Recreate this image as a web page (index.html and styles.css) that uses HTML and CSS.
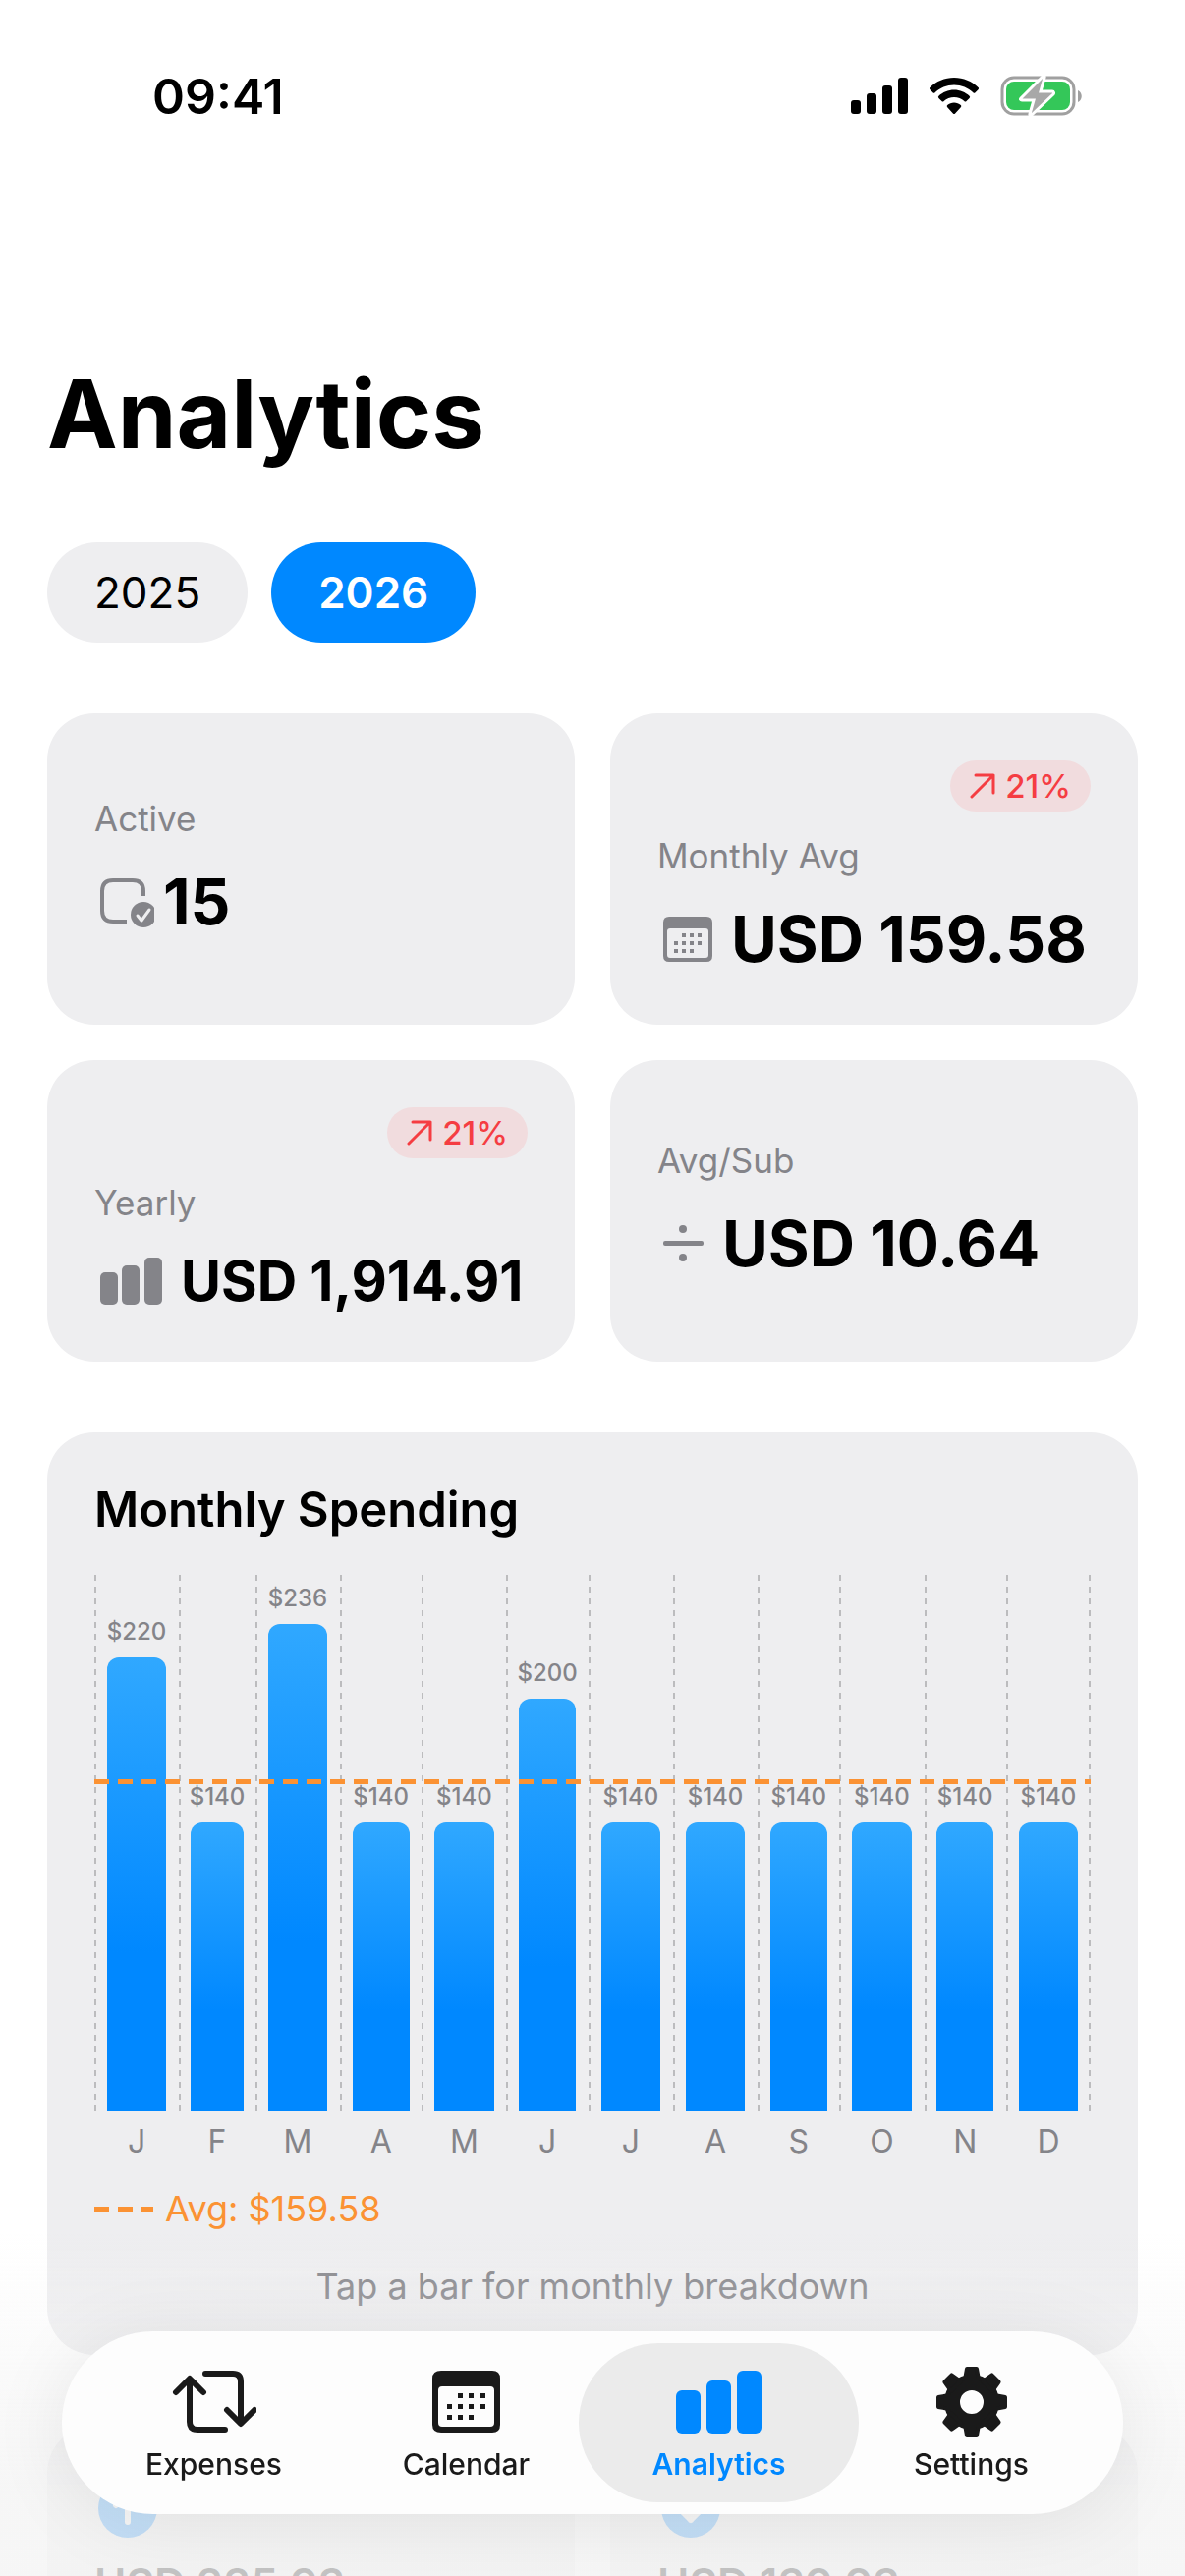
FILE: index.html
```html
<!DOCTYPE html>
<html lang="en">

<head>
    <meta charset="utf-8">
    <meta name="viewport" content="width=device-width, initial-scale=1">
    <title>Analytics</title>
    <link rel="stylesheet" href="styles.css">
</head>

<body>

    <header class="status-bar">
        <span class="time">09:41</span>
        <div class="status-icons">
            <svg width="58" height="38" viewBox="0 0 58 38">
                <rect x="0" y="23" width="10" height="14" rx="3" />
                <rect x="16" y="16" width="10" height="21" rx="3" />
                <rect x="32" y="8" width="10" height="29" rx="3" />
                <rect x="48" y="0" width="10" height="37" rx="3" />
            </svg>
            <svg width="50" height="38" viewBox="0 0 50 38">
                <path d="M25 0C15.500 0 6.800 3.800.500 10a1.500 1.500 0 0 0 0 2.200l3 3a1.500 1.500 0 0 0 2.100 0C10.700 10.400 17.500 7.500 25 7.500s14.300 2.900 19.400 7.700a1.500 1.500 0 0 0 2.100 0l3-3a1.500 1.500 0 0 0 0-2.200C43.200 3.800 34.500 0 25 0z" />
                <path d="M25 12.500c-6 0-11.500 2.400-15.600 6.200a1.500 1.500 0 0 0 0 2.200l3.100 3.100a1.500 1.500 0 0 0 2.100 0c2.800-2.500 6.400-4 10.400-4s7.600 1.500 10.400 4a1.500 1.500 0 0 0 2.100 0l3.100-3.100a1.500 1.500 0 0 0 0-2.200C36.500 14.900 31 12.500 25 12.500z" />
                <path d="M25 25.500c-2.600 0-5 1-6.800 2.500a1.500 1.500 0 0 0 0 2.200l5.700 6.300a1.500 1.500 0 0 0 2.200 0l5.700-6.300a1.500 1.500 0 0 0 0-2.200c-1.800-1.500-4.200-2.500-6.800-2.500z" />
            </svg>
            <svg width="83" height="42" viewBox="0 0 83 42">
                <rect x="2" y="2" width="73" height="37" rx="12" fill="none" stroke="#a0a0a0" stroke-width="3" />
                <path d="M79 15c5 2 5 10 0 12z" fill="#a0a0a0" />
                <rect x="6" y="6" width="65" height="29" rx="8" fill="#34c759" />
                <path d="M43 1L21 23c-1 1-.500 2 1 2h12l-4 14c-.500 2 1 2 2 1l22-21c1-1 .500-3-1-3H41l4-14c.500-2-1-2-2-1z" fill="#a8a8a8" stroke="#fff" stroke-width="3" />
            </svg>
        </div>
    </header>

    <main>
        <h1>Analytics</h1>

        <div class="years">
            <button class="year">2025</button>
            <button class="year selected">2026</button>
        </div>

        <section class="stats">
            <div class="card stat">
                <div class="label">Active</div>
                <div class="value tight">
                    <svg width="61" height="54" viewBox="0 0 61 54">
                        <path d="M50 21V16Q50 5 39 5H19Q8 5 8 16V36Q8 47 19 47H33" fill="none" stroke="#848489" stroke-width="4" />
                        <circle cx="50" cy="40" r="13" fill="#848489" />
                        <path d="M44 41l4 5 8-11" fill="none" stroke="#eeeef0" stroke-width="3" stroke-linecap="round" stroke-linejoin="round" />
                    </svg>
                    15
                </div>
            </div>

            <div class="card stat">
                <span class="badge">
                    <svg width="26" height="26" viewBox="0 0 26 26">
                        <path d="M2 24L24 2M6 2h18v18" />
                    </svg>
                    21%
                </span>
                <div class="label">Monthly Avg</div>
                <div class="value">
                    <svg width="57" height="46" viewBox="-6 0 57 46" fill="#848489">
                        <path fill-rule="evenodd" d="M6 0H44Q50 0 50 6V40Q50 46 44 46H6Q0 46 0 40V6Q0 0 6 0zM7 12Q4 12 4 15V39Q4 42 7 42H43Q46 42 46 39V15Q46 12 43 12z" />
                        <path d="M19 17h4v4h-4zM27 17h4v4h-4zM35 17h4v4h-4zM11 25h4v4h-4zM19 25h4v4h-4zM27 25h4v4h-4zM35 25h4v4h-4zM11 33h4v4h-4zM19 33h4v4h-4zM27 33h4v4h-4z" />
                    </svg>
                    USD 159.58
                </div>
            </div>

            <div class="card stat">
                <span class="badge">
                    <svg width="26" height="26" viewBox="0 0 26 26">
                        <path d="M2 24L24 2M6 2h18v18" />
                    </svg>
                    21%
                </span>
                <div class="label">Yearly</div>
                <div class="value small">
                    <svg width="70" height="48" viewBox="-6 0 70 48" fill="#848489">
                        <rect x="0" y="15" width="18" height="33" rx="5" />
                        <rect x="22" y="8" width="18" height="40" rx="5" />
                        <rect x="45" y="0" width="18" height="48" rx="5" />
                    </svg>
                    USD 1,914.91
                </div>
            </div>

            <div class="card stat">
                <div class="label">Avg/Sub</div>
                <div class="value">
                    <svg width="48" height="40" viewBox="-6 0 48 40" fill="#848489">
                        <circle cx="20" cy="5" r="4" />
                        <rect x="0" y="17" width="41" height="5" rx="2" />
                        <circle cx="20" cy="34" r="4" />
                    </svg>
                    USD 10.64
                </div>
            </div>
        </section>

        <section class="card chart-card">
            <h2>Monthly Spending</h2>
            <div class="chart months">
                <div class="col"><span class="amount">$220</span><button class="bar" style="--v: 220" aria-label="January"></button></div>
                <div class="col"><span class="amount">$140</span><button class="bar" style="--v: 140" aria-label="February"></button></div>
                <div class="col"><span class="amount">$236</span><button class="bar" style="--v: 236" aria-label="March"></button></div>
                <div class="col"><span class="amount">$140</span><button class="bar" style="--v: 140" aria-label="April"></button></div>
                <div class="col"><span class="amount">$140</span><button class="bar" style="--v: 140" aria-label="May"></button></div>
                <div class="col"><span class="amount">$200</span><button class="bar" style="--v: 200" aria-label="June"></button></div>
                <div class="col"><span class="amount">$140</span><button class="bar" style="--v: 140" aria-label="July"></button></div>
                <div class="col"><span class="amount">$140</span><button class="bar" style="--v: 140" aria-label="August"></button></div>
                <div class="col"><span class="amount">$140</span><button class="bar" style="--v: 140" aria-label="September"></button></div>
                <div class="col"><span class="amount">$140</span><button class="bar" style="--v: 140" aria-label="October"></button></div>
                <div class="col"><span class="amount">$140</span><button class="bar" style="--v: 140" aria-label="November"></button></div>
                <div class="col"><span class="amount">$140</span><button class="bar" style="--v: 140" aria-label="December"></button></div>
                <div class="avg-line dashes" style="--v: 159.58"></div>
            </div>
            <div class="axis months">
                <span>J</span><span>F</span><span>M</span><span>A</span><span>M</span><span>J</span>
                <span>J</span><span>A</span><span>S</span><span>O</span><span>N</span><span>D</span>
            </div>
            <div class="legend">
                <span class="legend-line dashes"></span>
                Avg: $159.58
            </div>
            <p class="hint">Tap a bar for monthly breakdown</p>
        </section>

        <section class="stats">
            <div class="card extreme">
                <svg width="60" height="60" viewBox="0 0 60 60">
                    <circle cx="30" cy="30" r="30" fill="#0088ff" />
                    <path d="M30 44V16M18 27l12-12 12 12" />
                </svg>
                <div class="extreme-value">USD 235.93</div>
            </div>
            <div class="card extreme">
                <svg width="60" height="60" viewBox="0 0 60 60">
                    <circle cx="30" cy="30" r="30" fill="#0088ff" />
                    <path d="M30 16V42M18 30l12 12 12-12" />
                </svg>
                <div class="extreme-value">USD 139.93</div>
            </div>
        </section>
    </main>

    <div class="fade"></div>

    <nav class="tab-bar">
        <a class="tab" href="#expenses">
            <svg width="86" height="72" viewBox="-1 0 86 72" fill="none" stroke="#1a1a1a" stroke-width="6" stroke-linecap="round" stroke-linejoin="round">
                <path d="M3 26L17 12L31 26M17 13V56Q17 64 25 64H53" />
                <path d="M33 7H61Q69 7 69 15V57M55 44L69 58L83 44" />
            </svg>
            Expenses
        </a>
        <a class="tab" href="#calendar">
            <svg width="70" height="72" viewBox="0 -4 70 72" fill="#1a1a1a">
                <path fill-rule="evenodd" d="M9 0H61Q69 0 69 8V55Q69 63 61 63H9Q0 63 0 55V8Q0 0 9 0zM10 16Q6 16 6 20V53Q6 57 10 57H59Q63 57 63 53V20Q63 16 59 16z" />
                <path d="M26 23h5v5h-5zM37 23h5v5h-5zM49 23h5v5h-5zM15 34h5v5h-5zM26 34h5v5h-5zM37 34h5v5h-5zM49 34h5v5h-5zM15 45h5v5h-5zM26 45h5v5h-5zM37 45h5v5h-5z" />
            </svg>
            Calendar
        </a>
        <a class="tab active" href="#analytics">
            <svg width="88" height="72" viewBox="0 -4 88 72" fill="#0088ff">
                <rect x="0" y="20" width="25" height="44" rx="6" />
                <rect x="31" y="10" width="25" height="54" rx="6" />
                <rect x="62" y="0" width="25" height="64" rx="6" />
            </svg>
            Analytics
        </a>
        <a class="tab" href="#settings">
            <svg width="72" height="72" viewBox="0 0 72 72" fill="#1a1a1a">
                <circle cx="36" cy="36" r="20" fill="none" stroke="#1a1a1a" stroke-width="16" />
                <g stroke="#1a1a1a" stroke-width="4" stroke-linejoin="round">
                    <path id="tooth" d="M31 2H41L43 13H29z" />
                    <use href="#tooth" transform="rotate(45 36 36)" />
                    <use href="#tooth" transform="rotate(90 36 36)" />
                    <use href="#tooth" transform="rotate(135 36 36)" />
                    <use href="#tooth" transform="rotate(180 36 36)" />
                    <use href="#tooth" transform="rotate(225 36 36)" />
                    <use href="#tooth" transform="rotate(270 36 36)" />
                    <use href="#tooth" transform="rotate(315 36 36)" />
                </g>
            </svg>
            Settings
        </a>
    </nav>

</body>

</html>
```

FILE: styles.css
```css
* {
    box-sizing: border-box;
}

body {
    margin: 0;
    height: 100vh;
    overflow: hidden;
    background-color: #ffffff;
    color: #000000;
    font-family: Inter, "Liberation Sans", sans-serif;
}

h1,
h2,
p {
    margin: 0;
}

button {
    border: none;
    padding: 0;
    font-family: inherit;
    cursor: pointer;
}

svg {
    display: block;
    flex-shrink: 0;
}

/* status bar */
.status-bar {
    display: flex;
    justify-content: space-between;
    align-items: center;
    padding: 68px 105px 0 155px;
    height: 128px;
}

.time {
    font-size: 50px;
    font-weight: 600;
}

.status-icons {
    display: flex;
    align-items: center;
    gap: 22px;
}

/* content */
main {
    display: flex;
    flex-direction: column;
    gap: 72px;
    padding: 234px 48px 0;
}

h1 {
    font-size: 96px;
    line-height: 118px;
    font-weight: 700;
}

.years {
    display: flex;
    gap: 24px;
}

.year {
    height: 102px;
    padding: 0 48px;
    border-radius: 51px;
    background-color: #eeeef0;
    color: #000000;
    font-size: 44px;
}

.year.selected {
    background-color: #0088ff;
    color: #ffffff;
    font-weight: 600;
}

.card {
    background-color: #eeeef0;
    border-radius: 48px;
    padding: 48px;
}

.stats {
    display: grid;
    grid-template-columns: 1fr 1fr;
    gap: 36px;
}

.stat {
    display: flex;
    flex-direction: column;
    justify-content: center;
    gap: 24px;
}

.badge {
    align-self: flex-end;
    display: flex;
    align-items: center;
    gap: 10px;
    padding: 0 20px;
    border-radius: 26px;
    background-color: #f1dcde;
    color: #f53d42;
    font-size: 33px;
    line-height: 52px;
    font-weight: 500;
}

.badge svg {
    fill: none;
    stroke: #f53d42;
    stroke-width: 3;
    stroke-linecap: round;
    stroke-linejoin: round;
}

.label {
    color: #848489;
    font-size: 35px;
    line-height: 43px;
}

.value {
    display: flex;
    align-items: center;
    gap: 18px;
    font-size: 64px;
    line-height: 78px;
    font-weight: 700;
    white-space: nowrap;
}

.value.tight {
    gap: 9px;
}

.value.small {
    font-size: 56px;
    line-height: 68px;
}

/* chart */
.chart-card {
    display: flex;
    flex-direction: column;
}

h2 {
    font-size: 49px;
    line-height: 61px;
    font-weight: 600;
}

/* columns are as wide as the month is long */
.months {
    display: grid;
    grid-template-columns: 31fr 28fr 31fr 30fr 31fr 30fr 31fr 31fr 30fr 31fr 30fr 31fr;
}

.chart {
    position: relative;
    height: 546px;
    margin-top: 36px;
}

.col {
    display: flex;
    flex-direction: column;
    align-items: center;
    justify-content: flex-end;
    height: 546px;
    min-width: 0;
    background: repeating-linear-gradient(#bcbcbe 0 6px, transparent 6px 12px) left / 2px 100% no-repeat;
}

.col:nth-child(12) {
    background: repeating-linear-gradient(#bcbcbe 0 6px, transparent 6px 12px) left / 2px 100% no-repeat,
        repeating-linear-gradient(#bcbcbe 0 6px, transparent 6px 12px) right / 2px 100% no-repeat;
}

.amount {
    margin-bottom: 12px;
    color: #848489;
    font-size: 24px;
    line-height: 28px;
    font-weight: 500;
}

.bar {
    flex-shrink: 0;
    width: 70%;
    height: calc(var(--v) / 260 * 100%);
    border-radius: 12px 12px 0 0;
    background: linear-gradient(#30a8ff, #0088ff 65%);
}

.dashes {
    height: 5px;
    background: repeating-linear-gradient(90deg, #fb9233 0 15px, transparent 15px 24px);
}

/* the line is centred on its value */
.avg-line {
    position: absolute;
    left: 0;
    right: 0;
    bottom: calc(var(--v) / 260 * 100% - 2px);
}

.axis {
    margin-top: 12px;
    color: #848489;
    font-size: 32px;
    line-height: 38px;
    text-align: center;
}

.legend {
    display: flex;
    align-items: center;
    gap: 12px;
    margin-top: 28px;
    color: #fb9233;
    font-size: 36px;
    line-height: 43px;
}

.legend-line {
    width: 60px;
}

.hint {
    margin-top: 36px;
    color: #848489;
    font-size: 36px;
    line-height: 43px;
    text-align: center;
}

.extreme {
    min-height: 300px;
}

.extreme svg {
    margin: 6px 4px 20px;
}

.extreme path {
    fill: none;
    stroke: #ffffff;
    stroke-width: 6;
    stroke-linecap: round;
    stroke-linejoin: round;
}

.extreme-value {
    font-size: 44px;
    line-height: 54px;
    font-weight: 600;
}

/* content fades out behind the tab bar */
.fade {
    position: fixed;
    left: 0;
    right: 0;
    bottom: 0;
    height: 350px;
    background: linear-gradient(rgba(246, 246, 246, 0), rgba(244, 244, 244, 0.8) 75%);
    pointer-events: none;
}

.tab-bar {
    position: fixed;
    left: 63px;
    right: 63px;
    bottom: 63px;
    display: flex;
    padding: 12px 26px;
    border-radius: 93px;
    background-color: #fdfdfd;
    box-shadow: 0 8px 80px rgba(0, 0, 0, 0.08);
}

.tab {
    flex: 1;
    display: flex;
    flex-direction: column;
    align-items: center;
    gap: 9px;
    height: 162px;
    margin: 0 -14px;
    padding-top: 24px;
    border-radius: 81px;
    color: #1a1a1a;
    font-size: 30px;
    line-height: 36px;
    font-weight: 500;
    text-decoration: none;
}

.tab.active {
    background-color: #ebebeb;
    color: #0088ff;
    font-weight: 600;
}
```
